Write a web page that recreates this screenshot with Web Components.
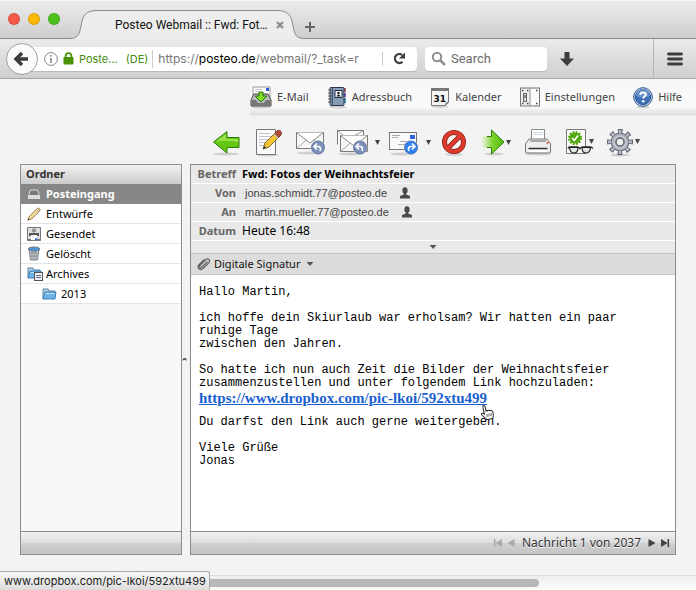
<!DOCTYPE html>
<html lang="de">
<head>
<meta charset="utf-8">
<meta name="viewport" content="width=device-width">
<title>Posteo Webmail :: Fwd: Fotos der Weihnachtsfeier</title>
<style>
  html, body { margin: 0; background: #f3f3f3; }
  body { font: 11px/20px "Noto Sans", "Open Sans", sans-serif; color: #111; --edge: #8c8c8c; --ui: Roboto, Inter, sans-serif; --ui-wide: Inter, Roboto, sans-serif; }
</style>
</head>
<body>
<webmail-window></webmail-window>
<script>
function define(name, css, html) {
  const template = document.createElement('template');
  template.innerHTML = `<style>*{box-sizing:border-box}button{font:inherit;color:inherit;background:none;border:0;padding:0;margin:0}a{color:inherit;text-decoration:none}${css}</style>${html}`;
  customElements.define(name, class extends HTMLElement {
    constructor() {
      super();
      this.attachShadow({ mode: 'open' }).append(template.content.cloneNode(true));
    }
  });
}

/* Icons: [width, height, markup] */
const reply = (x, y, c) => `<circle cx="${x}" cy="${y}" r="7" fill="${c}" stroke="#fff" stroke-opacity=".6"/><circle cx="${x}" cy="${y}" r="6.5" fill="none" stroke="#52648f" stroke-width=".7"/>`;
const envelope = (x, y) => `<rect x="${x}" y="${y}" width="27" height="16" fill="#f7f7f7" stroke="#777"/><path d="M${x} ${y + 16}l10-8.500M${x + 27} ${y + 16}l-10-8.500" stroke="#aaa" fill="none"/><path d="M${x} ${y}l13.500 10.500 13.500-10.500" stroke="#888" fill="#fff"/>`;
const shadow = (x, y, w) => `<ellipse cx="${x}" cy="${y}" rx="${w}" ry="1.500" fill="#000" opacity=".15"/>`;
const caret = (x, y) => `<path d="M${x} ${y}h5l-2.500 5z" fill="#444"/>`;
const folder = (x, y) => `<path d="M${x} ${y + 11}v-10h5l1 2h6v3" fill="#b8d3ea" stroke="#55809f"/><path d="M${x} ${y + 11}l2-7h11l-1 7z" fill="#6fb4e8" stroke="#3f7fb3"/><path d="M${x + 2.5} ${y + 5.5}h9" stroke="#c5e3f8"/>`;
const ICONS = {
  back: [32, 32, `<circle cx="16" cy="16" r="15.500" fill="#fbfbfb" stroke="#a0a0a0"/><path d="M22 16H11M16 10l-6 6 6 6" fill="none" stroke="#3d3d3d" stroke-width="3.500"/>`],
  info: [14, 14, `<circle cx="7" cy="7" r="6.400" fill="none" stroke="#858585"/><path d="M7 6v5" stroke="#777" stroke-width="1.400"/><circle cx="7" cy="3.800" r=".9" fill="#777"/>`],
  lock: [11, 13, `<rect x=".5" y="5" width="10" height="7.500" rx="1" fill="#4a9206"/><path d="M2.600 6V4a2.900 2.900 0 0 1 5.800 0v2" fill="none" stroke="#4a9206" stroke-width="1.700"/>`],
  reload: [13, 13, `<path d="M9.500 9.800A4.500 4.500 0 1 1 9.200 3" fill="none" stroke="#3d3d3d" stroke-width="2.200"/><path d="M12 .5v6H6z" fill="#3d3d3d"/>`],
  search: [15, 15, `<circle cx="6" cy="6" r="4.200" fill="none" stroke="#8e8e8e" stroke-width="2"/><path d="M9 9l5 5" stroke="#8e8e8e" stroke-width="2.500"/>`],
  download: [16, 16, `<path d="M5.500 1h5v6.500h4.500L8 15 1 7.500h4.500z" fill="#3d3d3d"/>`],
  burger: [16, 14, `<path d="M1.500 2h13M1.500 7h13M1.500 12h13" stroke="#3d3d3d" stroke-width="2.800" stroke-linecap="round"/>`],
  close: [8, 8, `<path d="M1 1l6 6M7 1L1 7" stroke="#8b8b8b" stroke-width="2.200"/>`],
  plus: [12, 12, `<path d="M6 1v10M1 6h10" stroke="#666" stroke-width="2"/>`],

  email: [22, 22, `${shadow(11, 21, 10)}<path d="M3 1h17v10H3z" fill="#fff" stroke="#999"/><path d="M5 3.500h7M5 5.500h4" stroke="#ccc"/><path d="M16 2h3v3h-3z" fill="#2858d6"/><path d="M4 8h14l3 6v6H1v-6z" fill="#b9bcbc" stroke="#444"/><path d="M2 14h4l2 3h6l2-3h4v5.500H2z" fill="#777"/><path d="M9 6h4v4h4l-6 6-6-6h4z" fill="#83dc28" stroke="#26720a"/>`],
  book: [20, 22, `${shadow(11, 21, 9)}<path d="M17 2h2v4h-2z" fill="#b66"/><path d="M17 7h2v4h-2z" fill="#85c"/><path d="M17 12h2v5h-2z" fill="#59b"/><rect x="3" y="1.500" width="14" height="18" rx="1" fill="#879cb5" stroke="#26344a"/><path d="M5.500 2v17" stroke="#425774"/><path d="M1 4h4M1 7h4M1 10h4M1 13h4M1 16h4" stroke="#555"/><path d="M8 4.500h7v7H8z" fill="#fff" stroke="#273142"/><circle cx="11.500" cy="7" r="1.200" fill="#111"/><path d="M9.500 10.500q2-4 4 0z" fill="#111"/>`],
  calendar: [20, 22, `${shadow(10, 20.500, 9)}<path d="M1.500 2.500h17v14l-3 3h-14z" fill="#f5f5f5" stroke="#777"/><path d="M1 2h18v3H1z" fill="#777"/><path d="M18.500 16l-3 3.500.5-3z" fill="#bbb" stroke="#777" stroke-width=".7"/><text x="9.800" y="15.500" font-family="DejaVu Sans" font-weight="bold" font-size="9" text-anchor="middle" fill="#111">31</text>`],
  settings: [20, 20, `<rect x=".5" y="1" width="19" height="18" fill="#eee" stroke="#777"/><path d="M10 1v18" stroke="#999"/><path d="M11 2h8v16h-8z" fill="#fafafa"/><rect x="3.500" y="6.500" width="3" height="8" fill="#ddd" stroke="#666"/><path d="M5 8v3" stroke="#333"/><path d="M2 3.500h1.500M7 3.500h1.500M16 3.500h1.500M2 16.500h1.500M7 16.500h1.500M16 16.500h1.500" stroke="#444" stroke-width="1.400"/>`],
  help: [20, 21, `${shadow(10, 20, 7)}<circle cx="10" cy="10" r="9.300" fill="#d3def0" stroke="#27508f"/><circle cx="10" cy="10" r="7.600" fill="#3e70b6" stroke="#2a5595"/><path d="M3 9a7 7 0 0 1 14 0q-7 3-14 0z" fill="#82a8db" opacity=".6"/><path d="M7.300 7.800q.2-2.400 2.800-2.400 2.700 0 2.700 2.200c0 1.900-2.600 1.800-2.600 4" fill="none" stroke="#fff" stroke-width="2"/><circle cx="10.200" cy="14.300" r="1.300" fill="#fff"/>`],

  prev: [32, 32, `${shadow(14, 28, 13)}<path d="M1.500 16L15 5.500v6h12v10H15v5.500z" fill="#64c813" stroke="#2c7d08"/><path d="M4 15.500L14 8v5h12v3q-12-2-22-.5z" fill="#a5e75d" opacity=".8"/>`],
  compose: [28, 32, `${shadow(12, 29, 11)}<path d="M.5 3.500h19v25H.5z" fill="#fafafa" stroke="#777"/><path d="M3 7.500h11M3 10.500h13M3 13.500h11M3 16.500h7M3 19.500h5" stroke="#c0c4cc"/><path d="M7 23l2-6L20.500 5.500l4 4L13 21z" fill="#f5c432" stroke="#695116" stroke-width=".8"/><path d="M18.500 7.500L21.500 4.500q2-1 3.500 1t-.5 4l-2 2z" fill="#b84b36" stroke="#522" stroke-width=".7"/><path d="M17.500 8.500l4 4 1-1-4-4z" fill="#bbb"/><path d="M7 23l1-3.200 2.300 2.200z" fill="#333"/>`],
  reply: [29, 32, `${shadow(14, 27, 13)}${envelope(.5, 6.500)}${reply(22, 21.500, '#7d90bc')}<path d="M19 20.500h4q2.500 1.500 1 4.500M21 17.500l-3 3 3 3" stroke="#fff" fill="none" stroke-width="1.600"/>`],
  replyall: [40, 32, `${shadow(14, 28, 13)}<path d="M.5 18.500v-14h26v5" fill="#fff" stroke="#777"/><path d="M1 5l10 8L26 5" fill="none" stroke="#999"/>${envelope(3.500, 9.500)}${reply(23, 21.500, '#7d90bc')}<path d="M20 20.500h4q2.500 1.500 1 4.500M22 17.500l-3 3 3 3" stroke="#fff" fill="none" stroke-width="1.600"/>${caret(38, 14)}`],
  forward: [41, 32, `${shadow(13, 28, 12)}<rect x=".5" y="6.500" width="27" height="17" fill="#fafafa" stroke="#777"/><path d="M3 9.500h8M3 11.500h6M11 15.500h7M9 18.500h7" stroke="#aaa"/><path d="M21 9h5v4h-5z" fill="#2c63e0"/>${reply(22, 21.500, '#2f80f2')}<path d="M25 20.500h-4q-2.500 1.500-1 4.500M23 17.500l3 3-3 3" stroke="#fff" fill="none" stroke-width="1.600"/>${caret(37, 14)}`],
  trash: [27, 32, `${shadow(12, 28.500, 9)}<circle cx="12" cy="16" r="9.500" fill="#f7f4f4" stroke="#871d16" stroke-width="5"/><path d="M5.500 22.500l13-13" stroke="#871d16" stroke-width="5"/><circle cx="12" cy="16" r="9.500" fill="none" stroke="#dc3b2d" stroke-width="3.500"/><path d="M5.500 22.500l13-13" stroke="#dc3b2d" stroke-width="3.500"/>`],
  next: [32, 32, `<linearGradient id="g"><stop offset="0" stop-color="#8fdb42" stop-opacity="0"/><stop offset=".5" stop-color="#7dd32b"/><stop offset="1" stop-color="#55b810"/></linearGradient>${shadow(13, 28, 10)}<path d="M0 10.500h10.500V4L23 16 10.500 28v-6.500H0z" fill="url(#g)"/><path d="M6 10.500h4.500V4L23 16 10.500 28v-6.500H6" fill="none" stroke="#2c7d08"/>${caret(25, 14)}`],
  print: [29, 32, `${shadow(13, 28, 13)}<path d="M6.500 3.500h13v12h-13z" fill="#fff" stroke="#888"/><path d="M8 6.500h10M8 8.500h10" stroke="#ccd5e2"/><path d="M4 13h18l3.500 5v8q0 1-1 1h-23q-1 0-1-1v-8z" fill="#eee" stroke="#777"/><path d="M5 15h16" stroke="#aaa" stroke-width="2"/><path d="M3.500 22.500h19" stroke="#333" stroke-width="1.500"/><path d="M4 24h18v2H4z" fill="#fff"/><circle cx="22.500" cy="17" r="1.200" fill="#e47362"/>`],
  mark: [29, 32, `<path d="M.5 3.500h19v24H.5z" fill="#fafafa" stroke="#777"/><circle cx="9" cy="12" r="5.500" fill="#50a90d"/><circle cx="9" cy="12" r="6" fill="none" stroke="#50a90d" stroke-width="2.200" stroke-dasharray="1.800 1.340"/><path d="M6 12l2.300 2.500L12 9.500" fill="none" stroke="#fff" stroke-width="1.700"/><path d="M2 22.500q.5-1.500 2-1.500h7q2 0 3 1.500 1-1.500 3-1.500h7q2 0 3 1.500" fill="none" stroke="#222" stroke-width="1.300"/><path d="M3.500 21.500h8.500q0 5.500-4 5.500t-4.500-5.500zM16 21.500h8.500q-.5 5.500-4.500 5.500t-4-5.500z" fill="#e3e6e8" stroke="#222" stroke-width="1.200"/>${caret(23, 13)}`],
  gear: [33, 32, `${shadow(13, 29, 10)}<circle cx="13" cy="16" r="10.500" fill="none" stroke="#565c68" stroke-width="5" stroke-dasharray="4.300 3.947" transform="rotate(-12 13 16)"/><circle cx="13" cy="16" r="9" fill="#a9aebb" stroke="#5b606c"/><circle cx="13" cy="16" r="10.300" fill="none" stroke="#b4b8c4" stroke-width="3.500" stroke-dasharray="2.700 5.390" transform="rotate(-8 13 16)"/><circle cx="13" cy="16" r="6" fill="none" stroke="#c8ccd4" stroke-width="1.500"/><circle cx="13" cy="16" r="4" fill="#eee" stroke="#60656f" stroke-width="1.500"/>${caret(28, 13)}`],

  inbox: [14, 14, `<path d="M3.500 3h7l2 5.500H1.500z" fill="#777" stroke="#ddd"/><path d="M1 8.500h12V12H1z" fill="#ddd"/>`],
  pencil: [14, 14, `<path d="M.8 13.200l1.700-4L10 1.700q1.300-1.200 2.500 0t0 2.500L5 11.500z" fill="#f6dc9a" stroke="#846b43" stroke-width=".9"/><path d="M9.500 2.500l2.500 2.500" stroke="#999"/><path d="M.8 13.200l.7-1.700 1 1z" fill="#222"/>`],
  sent: [14, 14, `<path d="M.5.500h13v13H.5z" fill="#dedede" stroke="#777"/><path d="M2 6h10v3H2z" fill="#555"/><path d="M4 8h6v5H4z" fill="#fff"/><circle cx="7" cy="3.500" r="1.500" fill="#bbb" stroke="#666"/><path d="M8 11h2v2H8z" fill="#3b82dd"/><path d="M1 12.500h3M10 12.500h3" stroke="#777"/>`],
  bin: [14, 15, `<path d="M2 3l1.500 11h7L12 3z" fill="#d4d8dc" stroke="#7c838a"/><path d="M5 5v9M7 5v9M9 5v9M3 7h8.500M3 10h8" stroke="#747b83" stroke-width=".7"/><ellipse cx="7" cy="3" rx="5.800" ry="2" fill="#4d96d8" stroke="#667584"/>`],
  archive: [14, 15, `${folder(1, 1)}<rect x="7.500" y="6.500" width="8" height="8" fill="#eef2f7" stroke="#555"/><path d="M9 9.500h5M9 11.500h5" stroke="#668"/>`],
  folder: [15, 14, folder(1, 1)],
  person: [12, 12, `<ellipse cx="6" cy="3.500" rx="2.600" ry="3.300" fill="#4b4b4b"/><path d="M4.800 5h2.400v2.500l3.800 1.500v2.500H1V9l3.800-1.500z" fill="#4b4b4b"/>`],
  clip: [13, 14, `<path d="M10.500 4.500l-5.800 5.800q-1.300.8-1.900-.3t.4-1.800L9 2.400q1.700-1.100 3 .2t0 3L6 11.500q-2.200 1.800-4 .2t0-4L7.500 2.500" fill="none" stroke="#606060" stroke-width="1.300"/>`],
  caret: [8, 6, `<path d="M.5 1h7L4 5z" fill="#555"/>`],
  first: [10, 10, `<path d="M1.700 1v8" stroke="#aaa" stroke-width="1.600"/><path d="M9 1v8L2.500 5z" fill="#aaa"/>`],
  previous: [10, 10, `<path d="M8.500 1v8L1.500 5z" fill="#aaa"/>`],
  following: [10, 10, `<path d="M1.500 1v8L8.500 5z" fill="#444"/>`],
  last: [10, 10, `<path d="M8.300 1v8" stroke="#444" stroke-width="1.600"/><path d="M1 1v8L7.500 5z" fill="#444"/>`],
  handle: [6, 5, `<path d="M.5 4q0-3 2.500-3 2 .5 1.500 3-1-1.500-2-1.500t-2 1.500" fill="#333"/>`],
  pointer: [14, 17, `<path d="M4 9V2.500Q4 1 5 1t1.300 1.500V7q.7-1 1.700 0 1-1 2 .2 1.400-.7 2 .8 1 .6.800 2.500-.2 3-1.300 5H5q-.5-2-2.500-4t-1.200-3q1-.8 2.700 1z" fill="#fff" stroke="#222" transform="rotate(-12 7 8)"/><path d="M7 10v3M9 9.500v3M11 9v3" stroke="#333" stroke-width=".8"/>`],
  tableft: [28, 29, `<path d="M0 28.500C8 28.500 9.500 24 11 16 12.500 5 16 .5 28 .5V29H0z" fill="#ededed"/><path d="M0 28.500C8 28.500 9.500 24 11 16 12.500 5 16 .5 28 .5" fill="none" stroke="#8a8a8a"/>`],
  tabright: [28, 29, `<path d="M28 28.500C20 28.500 18.500 24 17 16 15.500 5 12 .5 0 .5V29H28z" fill="#ededed"/><path d="M28 28.500C20 28.500 18.500 24 17 16 15.500 5 12 .5 0 .5" fill="none" stroke="#8a8a8a"/>`]
};
customElements.define('ui-icon', class extends HTMLElement {
  constructor() { super(); this.attachShadow({ mode: 'open' }); }
  connectedCallback() {
    const [w, h, art] = ICONS[this.getAttribute('name')];
    this.shadowRoot.innerHTML = `<style>:host{display:block;flex:none}svg{display:block;overflow:visible}</style><svg width="${w}" height="${h}" viewBox="0 0 ${w} ${h}" aria-hidden="true">${art}</svg>`;
  }
});

define('tab-strip', `
  :host{display:flex;height:39px;align-items:flex-end;background:linear-gradient(#ececec,#cdcdcd);border-top:1px solid #f8f8f8;font-family:var(--ui);box-shadow:inset 0 -1px #8a8a8a}
  .lights{display:flex;gap:8px;padding:0 10px 14px 8px;width:70px}
  i{width:12px;height:12px;border-radius:50%;border:1px solid #0002;flex:none}
  .tab{display:flex;align-items:flex-end}
  .mid{height:29px;background:#ededed;border-top:1px solid #8a8a8a;display:flex;align-items:center;gap:9px;font-size:12px;padding-left:17px}
  .mid button{z-index:1;margin-right:-8px}
  .new{padding:0 0 6px}`,
  `<div class="lights"><i style="background:#f4594a"></i><i style="background:#fbb905"></i><i style="background:#4fc11c"></i></div>
   <div class="tab"><ui-icon name="tableft"></ui-icon><div class="mid"><span>Posteo Webmail :: Fwd: Fot…</span><button aria-label="Tab schließen"><ui-icon name="close"></ui-icon></button></div><ui-icon name="tabright"></ui-icon></div>
   <button class="new" aria-label="Neuer Tab"><ui-icon name="plus"></ui-icon></button>`);

define('address-bar', `
  :host{display:flex;align-items:center;height:40px;background:linear-gradient(#ebebeb,#cfcfcf);border-bottom:1px solid #a5a5a5;padding-left:6px;font:13px/24px var(--ui)}
  .back{z-index:1}
  .url{display:flex;align-items:center;flex:1;height:24px;margin-left:-10px;padding:0 11px 0 16px;background:#fff;border-radius:0 4px 4px 0;box-shadow:0 1px #bbb;min-width:0;font-family:var(--ui-wide)}
  .id{display:flex;align-items:center;gap:5px;color:#448b0d;padding-right:4px;border-right:1px solid #ccc;line-height:18px;font-size:11px}
  .de{margin-left:3px}
  .text{flex:1;padding-left:5px;color:#777;white-space:nowrap;overflow:hidden;font-size:12px}
  .text b{font-weight:400;color:#000}
  .reload{padding-left:10px;border-left:1px solid #ccc;height:14px}
  .search{display:flex;align-items:center;gap:5px;width:122px;height:24px;background:#fff;border-radius:4px;margin-left:8px;padding-left:6px;box-shadow:0 1px #bbb}
  input{border:0;outline:0;background:none;font:inherit;padding:0;width:90px;min-width:0}
  input::placeholder{color:#6a6a6a;opacity:1}
  .down{margin:0 78px 0 12px}
  .menu{align-self:stretch;border-left:1px solid #b5b5b5;padding:0 13px}`,
  `<button class="back" aria-label="Zurück"><ui-icon name="back"></ui-icon></button>
   <div class="url"><div class="id"><ui-icon name="info"></ui-icon><ui-icon name="lock"></ui-icon><span>Poste…</span><span class="de">(DE)</span></div>
   <div class="text" role="textbox" contenteditable="true" spellcheck="false" aria-label="Adresse">https://<b>posteo.de</b>/webmail/?_task=r</div>
   <button class="reload" aria-label="Neu laden"><ui-icon name="reload"></ui-icon></button></div>
   <label class="search"><ui-icon name="search"></ui-icon><input type="search" placeholder="Search" aria-label="Search"></label>
   <button class="down" aria-label="Downloads"><ui-icon name="download"></ui-icon></button>
   <button class="menu" aria-label="Menü"><ui-icon name="burger"></ui-icon></button>`);

define('nav-item', `:host{display:block}a{display:flex;align-items:center;gap:5px;color:#444}`,
  `<a href="#"><slot name="icon"></slot><slot></slot></a>`);
define('main-nav', `
  :host{display:block;margin-left:250px}
  nav{display:flex;justify-content:space-between;height:37px;padding:0 14px 1px 0;align-items:center;background:linear-gradient(#f7f7f7,#fafafa 75%,#ddd 97%,#f3f3f3)}`,
  `<nav>${[['email', 'E-Mail'], ['book', 'Adressbuch'], ['calendar', 'Kalender'], ['settings', 'Einstellungen'], ['help', 'Hilfe']].map(([i, t]) => `<nav-item><ui-icon slot="icon" name="${i}"></ui-icon>${t}</nav-item>`).join('')}</nav>`);

define('mail-toolbar', `:host{display:flex;justify-content:flex-end;gap:12px;padding:10px 56px 6px 20px}`,
  [['prev', 'Zurück'], ['compose', 'Verfassen'], ['reply', 'Antworten'], ['replyall', 'Allen antworten'], ['forward', 'Weiterleiten'], ['trash', 'Löschen'], ['next', 'Verschieben'], ['print', 'Drucken'], ['mark', 'Markieren'], ['gear', 'Mehr']].map(([i, t]) => `<button aria-label="${t}"><ui-icon name="${i}"></ui-icon></button>`).join(''));

define('folder-row', `
  :host{display:block;border-bottom:1px solid #e4e4e4;color:#000}
  a{display:flex;align-items:center;gap:5px;height:19px;padding-left:6px}
  :host([selected]){background:#878787;color:#fff;font-weight:700;border-color:#878787}
  :host([nested]) a{padding-left:21px;gap:4px}`,
  `<a href="#"><slot name="icon"></slot><slot></slot></a>`);
define('panel-footer', `
  :host{display:flex;align-items:center;justify-content:flex-end;gap:3px;height:23px;border-top:1px solid var(--edge);background:linear-gradient(#f0f0f0,#ddd 50%,#d0d0d0 51%,#c4c4c4);padding-right:5px}`, `<slot></slot>`);
define('folder-panel', `
  :host{display:flex;flex-direction:column;border:1px solid var(--edge);background:#f8f8f8}
  h2{margin:0;font-size:11px;line-height:18px;height:19px;padding-left:5px;background:linear-gradient(#f2f2f2,#cbcbcb);color:#333}
  .list{flex:1}folder-row:not([selected]){background:#fff}`,
  `<h2>Ordner</h2><div class="list">${[['inbox', 'Posteingang', 'selected'], ['pencil', 'Entwürfe', ''], ['sent', 'Gesendet', ''], ['bin', 'Gelöscht', ''], ['archive', 'Archives', ''], ['folder', '2013', 'nested']].map(([i, t, a]) => `<folder-row ${a}><ui-icon slot="icon" name="${i}"></ui-icon>${t}</folder-row>`).join('')}</div><panel-footer></panel-footer>`);

define('message-header', `
  :host{display:block;background:#e9e9e9}
  table{width:100%;border-spacing:0}
  th,td{padding:0;line-height:18px;height:19px;text-align:left;border-bottom:1px solid #fff}
  th{width:45px;text-align:right;color:#666}
  td{padding-left:6px;color:#000}
  .who{display:flex;align-items:center;gap:12px;font:11px/18px "Liberation Sans",Arial,sans-serif;color:#444;padding-left:3px}
  .subject{font-weight:700}
  .date{font-size:12px}
  .more{display:flex;justify-content:center;align-items:center;width:100%;height:12px}
  .sig{display:flex;align-items:center;gap:4px;width:100%;height:22px;padding-left:6px;background:#dcdcdc;border:solid #c4c4c4;border-width:1px 0}
  .sig ui-icon:last-child{margin-left:2px}`,
  `<table><tr><th>Betreff</th><td class="subject">Fwd: Fotos der Weihnachtsfeier</td></tr>
   <tr><th>Von</th><td><a class="who" href="#">jonas.schmidt.77@posteo.de<ui-icon name="person"></ui-icon></a></td></tr>
   <tr><th>An</th><td><a class="who" href="#">martin.mueller.77@posteo.de<ui-icon name="person"></ui-icon></a></td></tr>
   <tr><th>Datum</th><td class="date">Heute 16:48</td></tr></table>
   <button class="more" aria-label="Mehr anzeigen"><ui-icon name="caret"></ui-icon></button>
   <button class="sig"><ui-icon name="clip"></ui-icon>Digitale Signatur<ui-icon name="caret"></ui-icon></button>`);

define('message-body', `
  :host{display:block;flex:1;background:#fff;padding:11px 8px;font:12px/13px "Liberation Mono","Courier New",monospace;color:#000}
  p{margin:0 0 13px}
  .link{display:flex;line-height:16px;margin:-13px 0 10px}
  a{position:relative;font-family:"Liberation Serif",serif;font-weight:700;font-size:15px;color:#1a5fd0;text-decoration:underline}
  a ui-icon{position:absolute;right:-7px;top:14px}`,
  `<p>Hallo Martin,</p><p>ich hoffe dein Skiurlaub war erholsam? Wir hatten ein paar<br>ruhige Tage<br>zwischen den Jahren.</p>
   <p>So hatte ich nun auch Zeit die Bilder der Weihnachtsfeier<br>zusammenzustellen und unter folgendem Link hochzuladen:</p>
   <p class="link"><a href="#">https://www.dropbox.com/pic-lkoi/592xtu499<ui-icon name="pointer"></ui-icon></a></p>
   <p>Du darfst den Link auch gerne weitergeben.</p><p>Viele Grüße<br>Jonas</p>`);

define('message-view', `
  :host{display:flex;flex-direction:column;border:1px solid var(--edge)}
  span{padding:0 3px;color:#333;font-size:12px;text-shadow:0 1px #fff}`,
  `<message-header></message-header><message-body></message-body>
   <panel-footer><button aria-label="Erste"><ui-icon name="first"></ui-icon></button><button aria-label="Vorherige"><ui-icon name="previous"></ui-icon></button><span>Nachricht 1 von 2037</span><button aria-label="Nächste"><ui-icon name="following"></ui-icon></button><button aria-label="Letzte"><ui-icon name="last"></ui-icon></button></panel-footer>`);

define('status-bar', `
  :host{display:block;position:relative;height:15px;background:linear-gradient(#eee,#fcfcfc);border-top:1px solid #ddd;padding-top:3px}
  .thumb{width:77.5%;height:8px;border-radius:0 4px 4px 0;background:#b8b8b8}
  .tip{position:absolute;left:0;bottom:0;padding:0 3px 0 4px;font:11px/18px var(--ui-wide);color:#222;background:linear-gradient(#f8f8f8,#dcdcdc);border:solid #aaa;border-width:1px 1px 0 0;border-radius:0 3px 0 0}`,
  `<div class="thumb"></div><div class="tip">www.dropbox.com/pic-lkoi/592xtu499</div>`);

define('webmail-window', `
  :host{display:flex;flex-direction:column;min-height:100vh}
  main{flex:1;display:grid;grid-template-columns:162px 8px 1fr;padding:0 20px 20px}
  .split{display:grid;align-items:center}`,
  `<tab-strip></tab-strip><address-bar></address-bar><main-nav></main-nav><mail-toolbar></mail-toolbar>
   <main><folder-panel></folder-panel><div class="split"><ui-icon name="handle"></ui-icon></div><message-view></message-view></main>
   <status-bar></status-bar>`);
</script>
</body>
</html>
